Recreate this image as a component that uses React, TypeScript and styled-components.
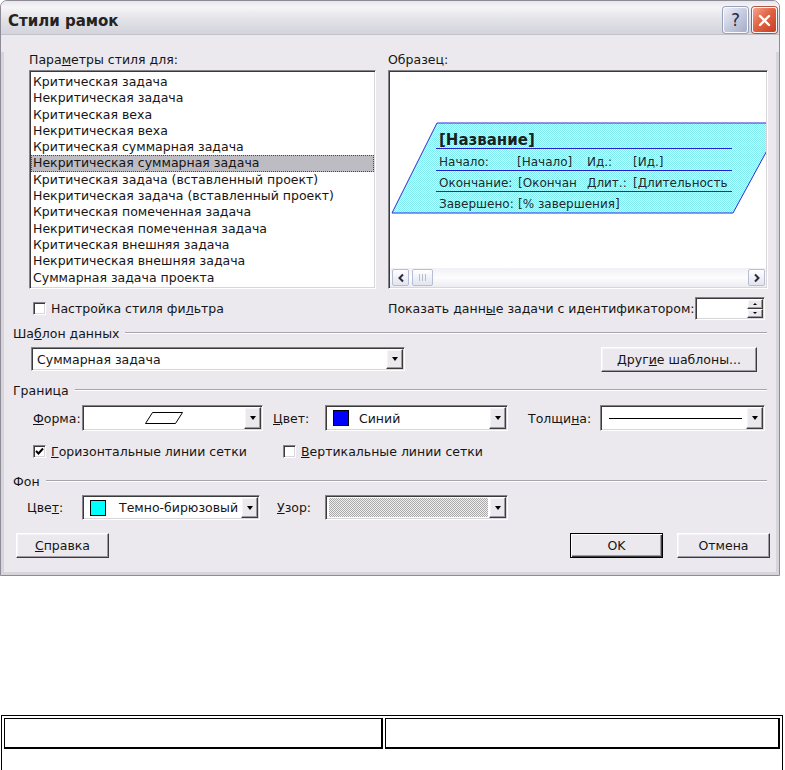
import React from 'react';
import styled, { createGlobalStyle, css } from 'styled-components';

const FACE = '#ece9ee';

const GlobalStyle = createGlobalStyle`
  html, body {
    margin: 0;
    padding: 0;
    background: #ffffff;
  }
  body {
    font-family: "DejaVu Sans", Verdana, sans-serif;
    font-size: 12.5px;
    color: #151515;
  }
`;

const sunken = css`
  border: 1px solid;
  border-color: #858389 #ffffff #ffffff #858389;
  box-shadow: inset 1px 1px 0 #3a3a3a, inset -1px -1px 0 #d8d5db;
`;

const raised = css`
  border: 1px solid;
  border-color: #ffffff #3c3c3c #3c3c3c #ffffff;
  box-shadow: inset -1px -1px 0 #9c9aa2, inset 1px 1px 0 #f6f4f8;
  background: ${FACE};
`;

const Window = styled.div`
  width: 780px;
  box-sizing: border-box;
  border: 1px solid #8d8b96;
  border-radius: 7px 7px 0 0;
  overflow: hidden;
  background: ${FACE};
`;

const TitleBar = styled.div`
  height: 34px;
  display: flex;
  align-items: flex-start;
  justify-content: space-between;
  padding: 0 2px 0 7px;
  background: linear-gradient(#e6e6ec 0%, #f6f6f8 18%, #e2e2e8 55%, #d3d3db 100%);
  border-bottom: 1px solid #c4c3cb;
  box-sizing: border-box;
`;

const TitleText = styled.div`
  font-weight: bold;
  font-size: 15px;
  color: #232323;
  padding-top: 11px;
`;

const CaptionButtons = styled.div`
  display: flex;
  gap: 4px;
  padding-top: 6px;
`;

const CaptionButton = styled.div<{ $kind: 'help' | 'close' }>`
  width: 25px;
  height: 26px;
  box-sizing: border-box;
  border-radius: 3px;
  border: 1px solid #fafafc;
  box-shadow: 0 0 0 1px ${p => (p.$kind === 'close' ? '#b5553f' : '#9aa0b8')};
  background: ${p =>
    p.$kind === 'close'
      ? 'linear-gradient(135deg, #f4a48e 0%, #e06444 45%, #c63e22 100%)'
      : 'linear-gradient(135deg, #eceef6 0%, #c3c8dc 55%, #a7adc6 100%)'};
  display: flex;
  align-items: center;
  justify-content: center;
  color: #2b2d44;
  font-size: 17px;
`;

const Body = styled.div`
  border: 3px solid #d6d5dc;
  border-top: none;
  padding: 0 6px 14px 9px;
`;

const TopGrid = styled.div`
  display: grid;
  grid-template-columns: 347px 380px;
  column-gap: 12px;
  margin: 17px 0 0 16px;
`;

const Column = styled.div`
  display: flex;
  flex-direction: column;
`;

const Caption = styled.div`
  height: 16px;
  line-height: 16px;
  margin-bottom: 2px;
  white-space: nowrap;
`;

const ListBox = styled.div`
  height: 219px;
  box-sizing: border-box;
  ${sunken};
  background: #ffffff;
  padding: 3px 1px 1px;
  overflow: hidden;
`;

const ListItem = styled.div<{ $selected?: boolean }>`
  height: 16.3px;
  line-height: 16.3px;
  padding-left: 2px;
  white-space: nowrap;
  ${p =>
    p.$selected &&
    css`
      background: #bebcc3;
      outline: 1px dotted #4a4a4a;
      outline-offset: -1px;
    `}
`;

const Preview = styled.div`
  height: 219px;
  box-sizing: border-box;
  ${sunken};
  background: #ffffff;
  padding: 1px;
  display: flex;
  flex-direction: column;
`;

const Canvas = styled.div`
  flex: 1;
  overflow: hidden;
`;

const HScroll = styled.div`
  height: 19px;
  display: flex;
  align-items: center;
  padding: 0 1px 0 2px;
  background: linear-gradient(#f1f1f5, #fdfdfe 50%, #ececf2);
`;

const ScrollBtn = styled.div<{ $w?: number }>`
  width: ${p => p.$w ?? 17}px;
  height: 17px;
  box-sizing: border-box;
  border: 1px solid #b7bdd4;
  border-radius: 2px;
  background: linear-gradient(#ffffff, #e2e4ef);
  display: flex;
  align-items: center;
  justify-content: center;
  gap: 2px;
`;

const Thumb = styled(ScrollBtn)`
  margin-left: 3px;
`;

const Grip = styled.span`
  width: 1px;
  height: 7px;
  background: #b8bccd;
`;

const Track = styled.div`
  flex: 1;
`;

const Row = styled.div<{ $mt: number; $h: number; $pl?: number }>`
  display: flex;
  align-items: center;
  height: ${p => p.$h}px;
  margin-top: ${p => p.$mt}px;
  padding-left: ${p => p.$pl ?? 0}px;
`;

const SplitRow = styled.div`
  display: grid;
  grid-template-columns: 347px 380px;
  column-gap: 12px;
  height: 23px;
  margin: 8px 0 0 16px;
  align-items: center;
`;

const SpinnerCell = styled.div`
  display: flex;
  align-items: center;
  justify-content: space-between;
  padding-right: 3px;
`;

const CheckLabel = styled.label<{ $w?: number }>`
  display: flex;
  align-items: center;
  gap: 5px;
  white-space: nowrap;
  width: ${p => (p.$w ? `${p.$w}px` : 'auto')};
  padding-left: 4px;
`;

const CheckBox = styled.span`
  width: 13px;
  height: 13px;
  box-sizing: border-box;
  ${sunken};
  background: #ffffff;
  display: inline-flex;
  align-items: center;
  justify-content: center;
  flex-shrink: 0;
`;

const SpinField = styled.div`
  width: 70px;
  height: 23px;
  box-sizing: border-box;
  ${sunken};
  background: #ffffff;
  display: flex;
  justify-content: flex-end;
  padding: 1px;
`;

const SpinButtons = styled.div`
  width: 16px;
  display: flex;
  flex-direction: column;
`;

const SpinHalf = styled.div<{ $up?: boolean }>`
  flex: 1;
  box-sizing: border-box;
  ${raised};
  display: flex;
  align-items: center;
  justify-content: center;
  &::after {
    content: '';
    border-left: 2px solid transparent;
    border-right: 2px solid transparent;
    ${p => (p.$up ? 'border-bottom: 2px solid #000;' : 'border-top: 2px solid #000;')}
  }
`;

const GroupHeader = styled.div<{ $mt: number }>`
  display: flex;
  align-items: center;
  height: 16px;
  margin-top: ${p => p.$mt}px;
  white-space: nowrap;
  &::after {
    content: '';
    flex: 1;
    margin: 0 3px 0 6px;
    border-top: 1px solid #a6a4ac;
    border-bottom: 1px solid #ffffff;
  }
`;

const FieldLabel = styled.span<{ $w: number; $ml?: number }>`
  width: ${p => p.$w}px;
  margin-left: ${p => p.$ml ?? 0}px;
  flex-shrink: 0;
  white-space: nowrap;
`;

const SelectBox = styled.div<{ $w: number }>`
  width: ${p => p.$w}px;
  height: 100%;
  box-sizing: border-box;
  ${sunken};
  background: #ffffff;
  display: flex;
  align-items: stretch;
  padding: 1px;
  flex-shrink: 0;
`;

const SelectValue = styled.div<{ $center?: boolean }>`
  flex: 1;
  display: flex;
  align-items: center;
  justify-content: ${p => (p.$center ? 'center' : 'flex-start')};
  padding-left: ${p => (p.$center ? 0 : 4)}px;
  overflow: hidden;
  white-space: nowrap;
`;

const DropButton = styled.div`
  width: 17px;
  box-sizing: border-box;
  ${raised};
  display: flex;
  align-items: center;
  justify-content: center;
  &::after {
    content: '';
    border-left: 3.5px solid transparent;
    border-right: 3.5px solid transparent;
    border-top: 4px solid #000;
  }
`;

const Swatch = styled.span<{ $color: string; $gap: number }>`
  width: 16px;
  height: 16px;
  box-sizing: border-box;
  border: 1px solid #000;
  background: ${p => p.$color};
  margin: 0 ${p => p.$gap}px 0 2px;
  flex-shrink: 0;
`;

const WeightLine = styled.div`
  flex: 1;
  height: 1px;
  background: #000;
  margin: 0 4px 0 3px;
`;

const PatternFill = styled.div`
  flex: 1;
  align-self: stretch;
  margin: 1px 1px 1px -2px;
  background-color: #efefef;
  background-image: conic-gradient(#a9a9a9 25%, transparent 0 50%, #a9a9a9 0 75%, transparent 0);
  background-size: 2px 2px;
`;

const PushButton = styled.button<{ $w: number; $default?: boolean }>`
  width: ${p => p.$w}px;
  height: 25px;
  box-sizing: border-box;
  font: inherit;
  color: inherit;
  padding: 0;
  ${raised};
  ${p =>
    p.$default &&
    css`
      border: 1px solid #000;
      box-shadow: inset 1px 1px 0 #ffffff, inset -1px -1px 0 #3c3c3c, inset -2px -2px 0 #9c9aa2;
    `}
`;

const Spacer = styled.div`
  flex: 1;
`;

const PageTable = styled.table`
  margin: 139px 0 0 1px;
  width: 782px;
  border: 1px solid #000;
  border-spacing: 2px;
  table-layout: fixed;
`;

const Cell = styled.td<{ $w?: number }>`
  height: 26px;
  width: ${p => (p.$w ? `${p.$w}px` : 'auto')};
  border-top: 1px solid #000;
  border-left: 1px solid #000;
  border-right: 2px solid #000;
  border-bottom: 2px solid #000;
`;

const EmptyCell = styled.td`
  height: 40px;
`;

const items = [
  'Критическая задача',
  'Некритическая задача',
  'Критическая веха',
  'Некритическая веха',
  'Критическая суммарная задача',
  'Некритическая суммарная задача',
  'Критическая задача (вставленный проект)',
  'Некритическая задача (вставленный проект)',
  'Критическая помеченная задача',
  'Некритическая помеченная задача',
  'Критическая внешняя задача',
  'Некритическая внешняя задача',
  'Суммарная задача проекта',
];

const Check = () => (
  <svg width="9" height="9" viewBox="0 0 9 9">
    <path d="M1 4 L3.5 6.5 L8 1.5" fill="none" stroke="#000" strokeWidth="2" />
  </svg>
);

const Chevron = ({ dir }: { dir: 'left' | 'right' }) => (
  <svg width="8" height="10" viewBox="0 0 8 10">
    <path
      d={dir === 'left' ? 'M6 1.5 L2.5 5 L6 8.5' : 'M2 1.5 L5.5 5 L2 8.5'}
      fill="none"
      stroke="#2a2a3a"
      strokeWidth="2"
    />
  </svg>
);

const SampleBox = () => (
  <svg width="376" height="196" viewBox="0 0 376 196" fontFamily="DejaVu Sans, Verdana, sans-serif">
    <defs>
      <pattern id="cyanDots" width="2" height="2" patternUnits="userSpaceOnUse">
        <rect width="2" height="2" fill="#d2fbfb" />
        <rect width="1" height="1" fill="#80ecef" />
        <rect x="1" y="1" width="1" height="1" fill="#80ecef" />
      </pattern>
      <clipPath id="clipDuration">
        <rect x="0" y="100" width="342" height="20" />
      </clipPath>
    </defs>
    <polygon points="47,51 392,51 343,141 2,141" fill="url(#cyanDots)" stroke="#2b2bdc" />
    <line x1="46" y1="76.5" x2="342" y2="76.5" stroke="#2323d6" />
    <line x1="46" y1="98.5" x2="342" y2="98.5" stroke="#2323d6" />
    <line x1="46" y1="119.5" x2="342" y2="119.5" stroke="#2323d6" />
    <text x="49" y="73" fontSize="15" fontWeight="bold" fill="#1e1e1e">[Название]</text>
    <g fontSize="12" fill="#262626">
      <text x="49" y="94">Начало:</text>
      <text x="127" y="94">[Начало]</text>
      <text x="197" y="94">Ид.:</text>
      <text x="243" y="94">[Ид.]</text>
      <text x="49" y="115">Окончание:</text>
      <text x="128" y="115">[Окончан</text>
      <text x="197" y="115">Длит.:</text>
      <text x="243" y="115" clipPath="url(#clipDuration)">[Длительность</text>
      <text x="49" y="136">Завершено:</text>
      <text x="128" y="136">[% завершения]</text>
    </g>
  </svg>
);

const FormShape = () => (
  <svg width="40" height="14" viewBox="0 0 40 14">
    <polygon points="8.5,1.5 38.5,1.5 31.5,12.5 1.5,12.5" fill="none" stroke="#000" />
  </svg>
);

const CloseGlyph = () => (
  <svg width="13" height="13" viewBox="0 0 13 13">
    <path d="M2 2 L11 11 M11 2 L2 11" stroke="#ffffff" strokeWidth="2.4" strokeLinecap="round" />
  </svg>
);

export default function App() {
  return (
    <>
      <GlobalStyle />
      <Window>
        <TitleBar>
          <TitleText>Стили рамок</TitleText>
          <CaptionButtons>
            <CaptionButton $kind="help">?</CaptionButton>
            <CaptionButton $kind="close">
              <CloseGlyph />
            </CaptionButton>
          </CaptionButtons>
        </TitleBar>

        <Body>
          <TopGrid>
            <Column>
              <Caption>
                Пара<u>м</u>етры стиля для:
              </Caption>
              <ListBox>
                {items.map((item, i) => (
                  <ListItem key={item} $selected={i === 5}>
                    {item}
                  </ListItem>
                ))}
              </ListBox>
            </Column>
            <Column>
              <Caption>Образец:</Caption>
              <Preview>
                <Canvas>
                  <SampleBox />
                </Canvas>
                <HScroll>
                  <ScrollBtn>
                    <Chevron dir="left" />
                  </ScrollBtn>
                  <Thumb $w={21}>
                    <Grip />
                    <Grip />
                    <Grip />
                  </Thumb>
                  <Track />
                  <ScrollBtn>
                    <Chevron dir="right" />
                  </ScrollBtn>
                </HScroll>
              </Preview>
            </Column>
          </TopGrid>

          <SplitRow>
            <CheckLabel>
              <CheckBox />
              <span>
                Настройка стиля фи<u>л</u>ьтра
              </span>
            </CheckLabel>
            <SpinnerCell>
              <span>
                Показать данн<u>ы</u>е задачи с идентификатором:
              </span>
              <SpinField>
                <SpinButtons>
                  <SpinHalf $up />
                  <SpinHalf />
                </SpinButtons>
              </SpinField>
            </SpinnerCell>
          </SplitRow>

          <GroupHeader $mt={5}>
            <span>
              Ша<u>б</u>лон данных
            </span>
          </GroupHeader>
          <Row $mt={6} $h={24} $pl={18}>
            <SelectBox $w={374}>
              <SelectValue>Суммарная задача</SelectValue>
              <DropButton />
            </SelectBox>
            <Spacer />
            <PushButton $w={156} style={{ marginRight: 13 }}>
              Друг<u>и</u>е шаблоны...
            </PushButton>
          </Row>

          <GroupHeader $mt={11}>Граница</GroupHeader>
          <Row $mt={7} $h={26} $pl={20}>
            <FieldLabel $w={49}>
              <u>Ф</u>орма:
            </FieldLabel>
            <SelectBox $w={181}>
              <SelectValue $center>
                <FormShape />
              </SelectValue>
              <DropButton />
            </SelectBox>
            <FieldLabel $w={52} $ml={10}>
              <u>Ц</u>вет:
            </FieldLabel>
            <SelectBox $w={183}>
              <SelectValue>
                <Swatch $color="#0000ff" $gap={10} />
                Синий
              </SelectValue>
              <DropButton />
            </SelectBox>
            <FieldLabel $w={72} $ml={20}>
              Толщи<u>н</u>а:
            </FieldLabel>
            <SelectBox $w={165}>
              <SelectValue>
                <WeightLine />
              </SelectValue>
              <DropButton />
            </SelectBox>
          </Row>

          <Row $mt={10} $h={20} $pl={16}>
            <CheckLabel $w={246}>
              <CheckBox>
                <Check />
              </CheckBox>
              <span>
                <u>Г</u>оризонтальные линии сетки
              </span>
            </CheckLabel>
            <CheckLabel>
              <CheckBox />
              <span>
                <u>В</u>ертикальные линии сетки
              </span>
            </CheckLabel>
          </Row>

          <GroupHeader $mt={12}>Фон</GroupHeader>
          <Row $mt={6} $h={25} $pl={14}>
            <FieldLabel $w={55}>
              Цве<u>т</u>:
            </FieldLabel>
            <SelectBox $w={178}>
              <SelectValue>
                <Swatch $color="#00ffff" $gap={13} />
                Темно-бирюзовый
              </SelectValue>
              <DropButton />
            </SelectBox>
            <FieldLabel $w={48} $ml={17}>
              <u>У</u>зор:
            </FieldLabel>
            <SelectBox $w={183}>
              <SelectValue>
                <PatternFill />
              </SelectValue>
              <DropButton />
            </SelectBox>
          </Row>

          <Row $mt={13} $h={25} $pl={3}>
            <PushButton $w={93}>
              <u>С</u>правка
            </PushButton>
            <Spacer />
            <PushButton $w={93} $default>
              OK
            </PushButton>
            <PushButton $w={93} style={{ marginLeft: 14 }}>
              Отмена
            </PushButton>
          </Row>
        </Body>
      </Window>

      <PageTable>
        <tbody>
          <tr>
            <Cell $w={374} />
            <Cell />
          </tr>
          <tr>
            <EmptyCell colSpan={2} />
          </tr>
        </tbody>
      </PageTable>
    </>
  );
}
